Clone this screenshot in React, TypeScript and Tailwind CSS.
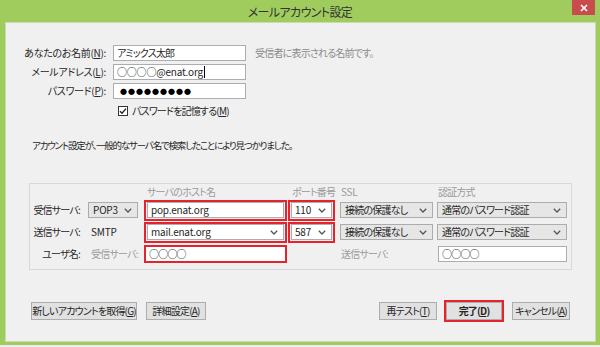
import React from 'react';

const Chevron = () => (
  <svg width="8" height="5" viewBox="0 0 8 5" className="shrink-0">
    <path d="M0.8 0.8l3.2 3.2 3.2-3.2" fill="none" stroke="#555" strokeWidth="1.3" />
  </svg>
);

const U = ({ children }: { children: React.ReactNode }) => (
  <span className="underline underline-offset-[1px]">{children}</span>
);

const GraySelect = ({ value, className }: { value: string; className: string }) => (
  <div className={`flex h-[16px] items-center justify-between overflow-hidden border border-[#acacac] bg-[#e6e6e6] pl-[4px] pr-[5px] ${className}`}>
    <span>{value}</span>
    <Chevron />
  </div>
);

const WhiteField = ({ value, combo, className }: { value: string; combo?: boolean; className: string }) => (
  <div className={`flex h-[16px] items-center justify-between border border-[#abadb3] bg-white pl-[3px] pr-[5px] ${className}`}>
    <span>{value}</span>
    {combo && <Chevron />}
  </div>
);

const Button = ({ children, className = '' }: { children: React.ReactNode; className?: string }) => (
  <div className={`flex h-[18px] items-center justify-center border border-[#adadad] bg-[#e1e1e1] ${className}`}>
    {children}
  </div>
);

const latin = 'tracking-[-0.2px]';

const App: React.FC = () => {
  return (
    <div className="flex h-[347px] w-[600px] flex-col whitespace-nowrap bg-[#a0cc5e] font-['Noto_Sans_CJK_JP',sans-serif] text-[10px] leading-[14px] tracking-[-0.8px] text-[#262626] [font-feature-settings:'palt']">
      {/* title bar */}
      <div className="grid h-[22px] grid-cols-[1fr_auto_1fr]">
        <div />
        <div className="self-center pt-[1px] text-[12px] tracking-[-0.6px] text-[#333]">メールアカウント設定</div>
        <div className="mr-[5px] flex h-[15px] w-[23px] items-center justify-center justify-self-end bg-[#c84b4d]">
          <svg width="8" height="8" viewBox="0 0 8 8">
            <path d="M1 1l6 6M7 1l-6 6" stroke="#fff" strokeWidth="1.6" />
          </svg>
        </div>
      </div>

      {/* dialog body */}
      <div className="ml-[5px] mr-[4px] flex h-[320px] flex-col border border-[#c9dcb0] bg-[#f0f0f0]">
        {/* identity fields */}
        <div className="mt-[22px] grid grid-cols-[100px_133px_auto] gap-x-[7px] gap-y-[3px]">
          <div className="flex h-[16px] items-center justify-end tracking-[-0.3px]">あなたのお名前(<U>N</U>):</div>
          <WhiteField value="アミックス太郎" className="w-[133px]" />
          <div className="ml-[2px] flex h-[16px] items-center text-[#8a8a8a]">受信者に表示される名前です。</div>

          <div className="flex h-[16px] items-center justify-end tracking-[-0.3px]">メールアドレス(<U>L</U>):</div>
          <div className={`flex h-[16px] w-[133px] items-center border border-[#abadb3] bg-white pl-[3px] ${latin}`}>
            <span>○○○○@enat.org</span>
            <span className="ml-[1px] h-[12px] w-[1px] bg-black" />
          </div>
          <div />

          <div className="flex h-[16px] items-center justify-end tracking-[-0.3px]">パスワード(<U>P</U>):</div>
          <div className="flex h-[16px] w-[133px] items-center border border-[#abadb3] bg-white pl-[6px] text-[7px] tracking-[1px] text-black">
            ●●●●●●●●●
          </div>
          <div />

          <div />
          <div className="mt-[2px] flex h-[14px] items-center">
            <div className="ml-[5px] mr-[4px] flex h-[10px] w-[10px] items-center justify-center border border-[#333] bg-white">
              <svg width="8" height="8" viewBox="0 0 8 8">
                <path d="M1 4.2l2 2 4-4.6" fill="none" stroke="#222" strokeWidth="1.4" />
              </svg>
            </div>
            <span>パスワードを記憶する(<U>M</U>)</span>
          </div>
          <div />
        </div>

        {/* message */}
        <div className="ml-[26px] mt-[20px] h-[14px] text-[9.5px] tracking-[-1.2px]">アカウント設定が、一般的なサーバ名で検索したことにより見つかりました。</div>

        {/* server settings group */}
        <div className="mx-[23px] mt-[31px] border border-[#d8d8d8] pb-[4px]">
          <div className="grid grid-cols-[56px_56px_146px_48px_100px_135px] text-[#9a9a9a]">
            <div className="h-[15px]" />
            <div />
            <div className="pl-[5px] pt-[2px] leading-[12px]">サーバのホスト名</div>
            <div className="pl-[4px] pt-[2px] leading-[12px]">ポート番号</div>
            <div className={`pl-[5px] pt-[2px] leading-[12px] ${latin}`}>SSL</div>
            <div className="pl-[2px] pt-[2px] leading-[12px]">認証方式</div>
          </div>

          {/* incoming */}
          <div className="grid h-[22px] grid-cols-[56px_56px_146px_48px_100px_135px] items-center">
            <div className="pr-[6px] text-right">受信サーバ:</div>
            <GraySelect value="POP3" className={`ml-[2px] w-[50px] ${latin}`} />
            <div className="ml-[2px] flex h-[21px] w-[143px] items-center border-2 border-[#e5232d] px-[1px]">
              <WhiteField value="pop.enat.org" className={`w-full ${latin}`} />
            </div>
            <div className="flex h-[21px] w-[47px] items-center border-2 border-[#e5232d] px-[1px]">
              <WhiteField value="110" combo className={`w-full ${latin}`} />
            </div>
            <GraySelect value="接続の保護なし" className="ml-[4px] w-[93px]" />
            <GraySelect value="通常のパスワード認証" className="ml-[1px] w-[130px]" />
          </div>

          {/* outgoing */}
          <div className="grid h-[22px] grid-cols-[56px_56px_146px_48px_100px_135px] items-center">
            <div className="pr-[6px] text-right">送信サーバ:</div>
            <div className={`pl-[5px] ${latin}`}>SMTP</div>
            <div className="ml-[2px] flex h-[21px] w-[143px] items-center border-2 border-[#e5232d] px-[1px]">
              <WhiteField value="mail.enat.org" combo className={`w-full ${latin}`} />
            </div>
            <div className="flex h-[21px] w-[47px] items-center border-2 border-[#e5232d] px-[1px]">
              <WhiteField value="587" combo className={`w-full ${latin}`} />
            </div>
            <GraySelect value="接続の保護なし" className="ml-[4px] w-[93px]" />
            <GraySelect value="通常のパスワード認証" className="ml-[1px] w-[130px]" />
          </div>

          {/* user name */}
          <div className="grid h-[22px] grid-cols-[56px_56px_146px_48px_100px_135px] items-center">
            <div className="pr-[6px] text-right">ユーザ名:</div>
            <div className="pl-[5px] text-[#9a9a9a]">受信サーバ:</div>
            <div className="ml-[2px] flex h-[18px] w-[143px] items-center border-2 border-[#e5232d] bg-white pl-[3px]">
              ○○○○
            </div>
            <div />
            <div className="pl-[5px] text-[#9a9a9a]">送信サーバ:</div>
            <WhiteField value="○○○○" className="ml-[2px] w-[129px]" />
          </div>
        </div>

        {/* buttons */}
        <div className="mx-[25px] mt-[30px] flex items-center">
          <Button className="w-[106px]">新しいアカウントを取得(<U>G</U>)</Button>
          <Button className="ml-[9px] w-[60px]">詳細設定(<U>A</U>)</Button>
          <div className="flex-1" />
          <Button className="w-[58px]">再テスト(<U>T</U>)</Button>
          <div className="ml-[7px] flex h-[22px] w-[60px] items-center border-2 border-[#e5232d]">
            <Button className="w-full font-bold">完了(<U>D</U>)</Button>
          </div>
          <Button className="ml-[8px] w-[58px]">キャンセル(<U>A</U>)</Button>
        </div>
      </div>

      <div className="mt-[3px] h-[2px] bg-[#ececec]" />
    </div>
  );
};

export default App;
